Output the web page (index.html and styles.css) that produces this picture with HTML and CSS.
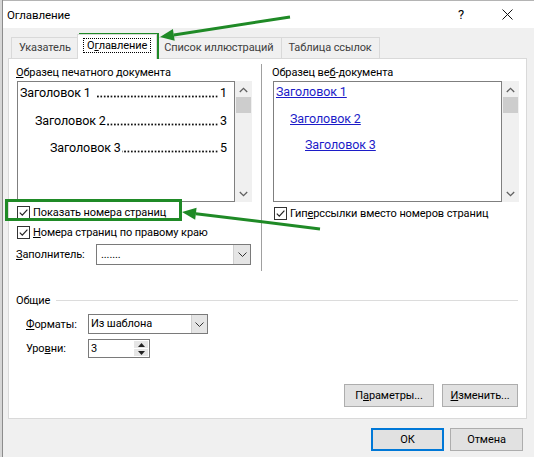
FILE: index.html
```html
<!DOCTYPE html>
<html lang="ru">
<head>
<meta charset="utf-8">
<title>Оглавление</title>
<link rel="stylesheet" href="styles.css">
</head>
<body>
<div class="screen">
  <div class="strip"></div>
  <div class="dialog">
    <div class="titlebar">
      <span class="title">Оглавление</span>
      <span class="help">?</span>
      <span class="close"><svg width="11" height="11" viewBox="0 0 11 11"><path d="M0.5 0.5 L10.5 10.5 M10.5 0.5 L0.5 10.5" stroke="#111" stroke-width="1" fill="none"/></svg></span>
    </div>
    <div class="tabs">
      <div class="tab">Указатель</div>
      <div class="tab active"><span class="focus">О<u>г</u>лавление</span></div>
      <div class="tab">Список иллюстраций</div>
      <div class="tab">Таблица ссылок</div>
    </div>
    <div class="panel">
      <div class="top">
        <div class="col col-left">
          <div class="label"><u>О</u>бразец печатного документа</div>
          <div class="preview">
            <div class="preview-list print">
              <div class="pline l1"><span class="name">Заголовок 1</span><span class="leader sp"></span><span class="num">1</span></div>
              <div class="pline l2"><span class="name">Заголовок 2</span><span class="leader"></span><span class="num">3</span></div>
              <div class="pline l3"><span class="name">Заголовок 3</span><span class="leader"></span><span class="num">5</span></div>
            </div>
            <div class="scrollbar">
              <svg class="sarrow" width="9" height="6" viewBox="0 0 9 6"><path d="M0.8 5 L4.5 1.3 L8.2 5" stroke="#606060" stroke-width="1.3" fill="none"/></svg>
              <div class="thumb"></div>
              <div class="track"></div>
              <svg class="sarrow" width="9" height="6" viewBox="0 0 9 6"><path d="M0.8 1 L4.5 4.7 L8.2 1" stroke="#606060" stroke-width="1.3" fill="none"/></svg>
            </div>
          </div>
          <div class="check-row r1">
            <span class="checkbox"><svg width="11" height="11" viewBox="0 0 11 11"><path d="M1.8 5.6 L4.3 8.1 L9.4 2.6" stroke="#222" stroke-width="1.2" fill="none"/></svg></span>
            <span>Показать номера страниц</span>
          </div>
          <div class="check-row r2">
            <span class="checkbox"><svg width="11" height="11" viewBox="0 0 11 11"><path d="M1.8 5.6 L4.3 8.1 L9.4 2.6" stroke="#222" stroke-width="1.2" fill="none"/></svg></span>
            <span><u>Н</u>омера страниц по правому краю</span>
          </div>
          <div class="field-row">
            <span class="field-label"><u>З</u>аполнитель:</span>
            <div class="combo filler">
              <span class="combo-text">.......</span>
              <span class="combo-btn"><svg width="9" height="5" viewBox="0 0 9 5"><path d="M0.5 0.5 L4.5 4.5 L8.5 0.5" stroke="#333" stroke-width="1" fill="none"/></svg></span>
            </div>
          </div>
        </div>
        <div class="col col-right">
          <div class="label">Образец ве<u>б</u>-документа</div>
          <div class="preview">
            <div class="preview-list web">
              <div class="wline w1"><span class="link">Заголовок 1</span></div>
              <div class="wline w2"><span class="link">Заголовок 2</span></div>
              <div class="wline w3"><span class="link">Заголовок 3</span></div>
            </div>
            <div class="scrollbar">
              <svg class="sarrow" width="9" height="6" viewBox="0 0 9 6"><path d="M0.8 5 L4.5 1.3 L8.2 5" stroke="#606060" stroke-width="1.3" fill="none"/></svg>
              <div class="thumb"></div>
              <div class="track"></div>
              <svg class="sarrow" width="9" height="6" viewBox="0 0 9 6"><path d="M0.8 1 L4.5 4.7 L8.2 1" stroke="#606060" stroke-width="1.3" fill="none"/></svg>
            </div>
          </div>
          <div class="check-row r3">
            <span class="checkbox"><svg width="11" height="11" viewBox="0 0 11 11"><path d="M1.8 5.6 L4.3 8.1 L9.4 2.6" stroke="#222" stroke-width="1.2" fill="none"/></svg></span>
            <span>Гип<u>е</u>рссылки вместо номеров страниц</span>
          </div>
        </div>
      </div>
      <div class="general">
        <div class="group-head"><span>Общие</span><span class="group-line"></span></div>
        <div class="grow formats">
          <span class="glabel"><u>Ф</u>орматы:</span>
          <div class="combo fmt">
            <span class="combo-text">Из шаблона</span>
            <span class="combo-btn"><svg width="9" height="5" viewBox="0 0 9 5"><path d="M0.5 0.5 L4.5 4.5 L8.5 0.5" stroke="#333" stroke-width="1" fill="none"/></svg></span>
          </div>
        </div>
        <div class="grow levels">
          <span class="glabel">Уро<u>в</u>ни:</span>
          <div class="spin">
            <span class="spin-text">3</span>
            <span class="spin-btns">
              <span class="sb"><svg width="7" height="4" viewBox="0 0 7 4"><path d="M0 4 L3.5 0 L7 4 Z" fill="#222"/></svg></span>
              <span class="sb"><svg width="7" height="4" viewBox="0 0 7 4"><path d="M0 0 L3.5 4 L7 0 Z" fill="#222"/></svg></span>
            </span>
          </div>
        </div>
      </div>
      <div class="panel-buttons">
        <button class="btn params">П<u>а</u>раметры...</button>
        <button class="btn modify"><u>И</u>зменить...</button>
      </div>
    </div>
    <div class="footer">
      <button class="btn ok">ОК</button>
      <button class="btn cancel">Отмена</button>
    </div>
  </div>
  <svg class="annot" width="534" height="457" viewBox="0 0 534 457">
    <g stroke="#1f8a26" fill="none" stroke-width="3">
      <rect x="80.5" y="34.5" width="77" height="23"/>
      <rect x="6.5" y="200.5" width="174" height="19"/>
      <line x1="290" y1="17" x2="173.8" y2="34.9"/>
      <line x1="320" y1="229" x2="195.9" y2="213.7"/>
    </g>
    <g fill="#1f8a26">
      <polygon points="160,37 174.7,40.8 172.9,29.0"/>
      <polygon points="182,212 195.2,219.7 196.6,207.7"/>
    </g>
  </svg>
</div>
</body>
</html>
```
FILE: styles.css
```css
* { box-sizing: border-box; }
html, body { margin: 0; padding: 0; }
body {
  width: 534px;
  height: 457px;
  overflow: hidden;
  font-family: "Segoe UI", Roboto, "Noto Sans", sans-serif;
  font-size: 11px;
  letter-spacing: -0.1px;
  color: #000;
  background: #f0f0f0;
}
u { text-decoration: underline; text-underline-offset: 1px; }

.screen { position: relative; display: flex; width: 534px; height: 457px; }
.strip { width: 3px; background: #d6d6d6; border-right: 1px solid #8c8c8c; }
.dialog {
  flex: 1;
  display: flex;
  flex-direction: column;
  background: #f0f0f0;
  border-top: 1px solid #b4b4b4;
}

/* title bar */
.titlebar {
  height: 27px;
  background: #fff;
  display: flex;
  align-items: center;
  padding-left: 4px;
  font-size: 11.5px;
}
.title { flex: 1; }
.help { width: 46px; text-align: center; font-size: 13px; }
.close { width: 46px; display: flex; justify-content: center; margin-right: 4px; }

/* tabs */
.tabs {
  height: 30px;
  display: flex;
  align-items: flex-end;
  padding-left: 8px;
}
.tab {
  height: 21px;
  line-height: 19px;
  padding: 0 7px;
  border: 1px solid #d9d9d9;
  border-bottom: none;
  background: #f0f0f0;
  color: #404040;
  margin-right: -1px;
}
.tab.active {
  height: 25px;
  line-height: 22px;
  background: #fff;
  color: #000;
  position: relative;
  z-index: 1;
  margin-bottom: -1px;
  padding: 0 5px;
  margin-left: -1px;
}
.focus { border: 1px dotted #000; padding: 0 3px; }

/* panel */
.panel {
  height: 361px;
  margin: 0 7px 0 5px;
  border: 1px solid #d9d9d9;
  background: #fff;
  display: flex;
  flex-direction: column;
}
.top { display: flex; height: 212px; }
.col { padding-top: 5px; }
.col-left {
  width: 253px;
  padding-left: 8px;
  border-right: 1px solid #a0a0a0;
  margin-top: 5px;
  padding-top: 0;
}
.col-right { flex: 1; padding-left: 11px; padding-right: 7px; }
.label { height: 17px; line-height: 17px; margin-left: -1px; }

.preview { display: flex; height: 121px; }
.preview-list { border: 1px solid #7f7f7f; background: #fff; padding-top: 1px; }
.print { width: 218px; }
.web { width: 229px; }
.scrollbar {
  width: 17px;
  background: #f0f0f0;
  display: flex;
  flex-direction: column;
  align-items: center;
  padding: 6px 0 5px;
}
.thumb { width: 15px; height: 16px; background: #cdcdcd; margin-top: 4px; }
.track { flex: 1; }

.pline {
  display: flex;
  height: 20px;
  line-height: 20px;
  margin-bottom: 7.5px;
  font-size: 12.5px;
  padding-right: 7px;
  white-space: nowrap;
}
.l1 { padding-left: 2px; }
.l2 { padding-left: 17px; }
.l3 { padding-left: 32px; }
.leader {
  flex: 1;
  margin: 0 2px 0 1px;
  background-image: radial-gradient(circle, #111 0.9px, transparent 1.2px);
  background-size: 3.4px 3px;
  background-repeat: repeat-x;
  background-position: right 0 bottom 5px;
}
.leader.sp { margin-left: 5px; }

.wline {
  height: 20px;
  line-height: 20px;
  margin-bottom: 6.5px;
  font-size: 12.5px;
}
.w1 { padding-left: 2px; margin-top: -1px; }
.w2 { padding-left: 16px; }
.w3 { padding-left: 31px; }
.link { color: #1c1cc8; text-decoration: underline; }

.check-row { display: flex; align-items: center; gap: 3px; height: 15px; }
.r1 { margin-top: 3px; }
.r2 { margin-top: 5px; }
.r3 { margin-top: 4px; margin-left: 1px; }
.checkbox {
  width: 13px;
  height: 13px;
  border: 1px solid #333;
  background: #fff;
  display: flex;
  align-items: center;
  justify-content: center;
}

.field-row { display: flex; align-items: center; margin-top: 4px; height: 21px; }
.field-label { width: 80px; margin-left: -1px; }
.combo {
  display: flex;
  align-items: stretch;
  border: 1px solid #7a7a7a;
  background: #fff;
  height: 21px;
}
.filler { width: 155px; }
.combo-text { flex: 1; padding-left: 4px; line-height: 19px; }
.combo-btn {
  width: 17px;
  background: #e5e5e5;
  border-left: 1px solid #cfcfcf;
  display: flex;
  align-items: center;
  justify-content: center;
}

/* general */
.general { padding: 0 8px 0 7px; }
.group-head { display: flex; align-items: center; margin-top: 22px; height: 14px; }
.group-line { flex: 1; height: 1px; background: #dcdcdc; margin-left: 6px; }
.grow { display: flex; align-items: center; padding-left: 10px; }
.glabel { width: 62px; }
.formats { margin-top: 7px; }
.fmt { width: 120px; height: 20px; }
.fmt .combo-btn { width: 16px; }
.fmt .combo-text { line-height: 18px; padding-left: 2px; }
.levels { margin-top: 5px; }
.spin {
  width: 62px;
  height: 19px;
  border: 1px solid #7a7a7a;
  display: flex;
}
.spin-text { flex: 1; padding-left: 2px; line-height: 17px; }
.spin-btns { width: 15px; display: flex; flex-direction: column; gap: 1px; background: #fff; padding: 1px 1px 1px 0; }
.sb { flex: 1; background: #e6e6e6; display: flex; align-items: center; justify-content: center; }

/* buttons */
.btn {
  font-family: inherit;
  font-size: 11px;
  letter-spacing: -0.1px;
  color: #000;
  background: #e1e1e1;
  border: 1px solid #adadad;
  height: 23px;
  padding: 0;
  margin: 0;
}
.panel-buttons {
  display: flex;
  justify-content: flex-end;
  gap: 8px;
  padding-right: 8px;
  margin-top: 26px;
}
.params { width: 90px; }
.modify { width: 76px; }

.footer {
  display: flex;
  justify-content: flex-end;
  gap: 6px;
  padding: 9px 11px 0 0;
}
.ok { width: 73px; border: 2px solid #0078d7; }
.cancel { width: 73px; }

.annot { position: absolute; left: 0; top: 0; pointer-events: none; }
```
